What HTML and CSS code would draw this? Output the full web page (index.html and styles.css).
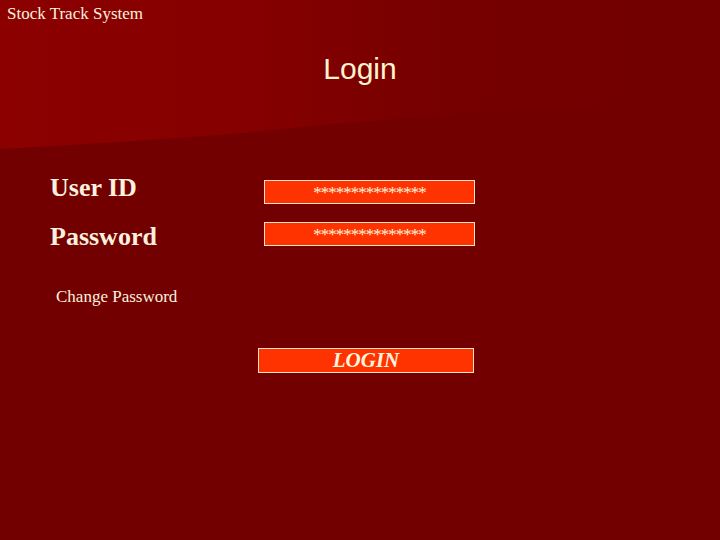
FILE: index.html
```html
<!DOCTYPE html>
<html lang="en">
<head>
  <meta charset="UTF-8" />
  <title>Stock Track System - Login</title>
  <link rel="stylesheet" href="styles.css">
</head>
<body>
  <div class="slide">
    <div class="brand">Stock Track System</div>
    <h1>Login</h1>

    <div class="form">
      <div class="row row-user">
        <label>User ID</label>
        <div class="field">***************</div>
      </div>
      <div class="row row-pass">
        <label>Password</label>
        <div class="field">***************</div>
      </div>

      <a class="change-link">Change Password</a>

      <button class="login-btn">LOGIN</button>
    </div>
  </div>
</body>
</html>
```

FILE: styles.css
```css
body {
  margin: 0;
  background: #720000;
  font-family: "Liberation Serif", serif;
  color: #fbf1de;
}
.slide {
  position: relative;
  width: 720px;
  height: 540px;
  overflow: hidden;
  background: #720000;
}
/* slanted red header band behind the content */
.slide::before {
  content: "";
  position: absolute;
  left: 0;
  top: 0;
  width: 720px;
  height: 152px;
  background: linear-gradient(90deg, #8c0000 0%, #850000 35%, #760000 62%, #720000 100%);
  clip-path: polygon(0 0, 100% 0, 100% 100px, 480px 112px, 333px 124px, 233px 134px, 120px 142px, 0 149px);
}
.brand, h1, .form {
  position: relative;
}
.brand {
  padding: 4px 0 0 7px;
  font-size: 17px;
  line-height: 20px;
}
h1 {
  margin: 27px 0 0;
  text-align: center;
  font-family: "Liberation Sans", sans-serif;
  font-weight: normal;
  font-size: 30px;
  line-height: 36px;
  color: #fff4cf;
}
.form {
  padding-left: 50px;
  margin-top: 87px;
}
.row {
  display: flex;
  align-items: flex-start;
}
.row label {
  width: 214px;
  font-size: 26px;
  font-weight: bold;
  line-height: 28px;
}
.row-user .field {
  margin-top: 6px;
}
.row-pass {
  margin-top: 18px;
}
.row-pass label {
  padding-top: 1px;
}
.field {
  width: 209px;
  height: 22px;
  background: #ff3300;
  border: 1px solid #ffe2c2;
  text-align: center;
  font-size: 17px;
  line-height: 24px;
  letter-spacing: -1px;
  color: #fff3dc;
}
.change-link {
  display: block;
  margin: 36px 0 0 6px;
  font-size: 17px;
  line-height: 20px;
}
.login-btn {
  display: block;
  margin: 41px 0 0 208px;
  width: 216px;
  height: 25px;
  padding: 0;
  background: #ff3300;
  border: 1px solid #ffe2c2;
  font-family: "Liberation Serif", serif;
  font-weight: bold;
  font-style: italic;
  font-size: 21px;
  line-height: 23px;
  color: #fff3dc;
  text-align: center;
}
```
